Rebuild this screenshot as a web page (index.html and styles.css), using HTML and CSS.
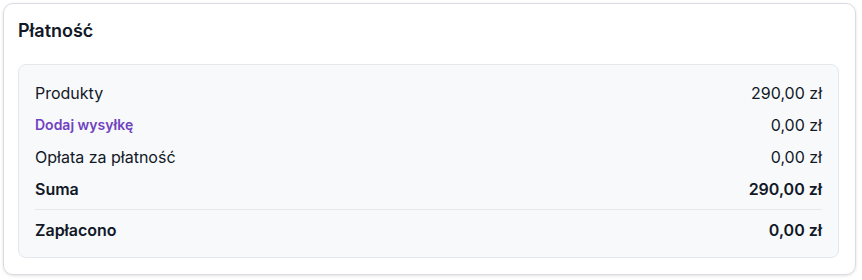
FILE: index.html
```html
<!DOCTYPE html>
<html lang="pl">
<head>
    <meta charset="UTF-8">
    <meta name="viewport" content="width=device-width, initial-scale=1.0">
    <title>Płatność</title>
    <link rel="stylesheet" href="styles.css">
</head>
<body>
    <div class="card">
        <div class="card-title">Płatność</div>
        <div class="summary">
            <div class="row">
                <span>Produkty</span>
                <span>290,00 zł</span>
            </div>
            <div class="row">
                <a class="link" href="#">Dodaj wysyłkę</a>
                <span>0,00 zł</span>
            </div>
            <div class="row">
                <span>Opłata za płatność</span>
                <span>0,00 zł</span>
            </div>
            <div class="row total">
                <span>Suma</span>
                <span>290,00 zł</span>
            </div>
            <div class="row total paid">
                <span>Zapłacono</span>
                <span>0,00 zł</span>
            </div>
        </div>
    </div>
</body>
</html>
```

FILE: styles.css
```css
body {
    margin: 0;
    padding: 3px 6px 5px 3px;
    font-family: Inter, "Noto Sans", sans-serif;
    color: #111827;
    background: #ffffff;
}
.card {
    border: 1px solid #d9dce3;
    border-radius: 10px;
    box-shadow: 0 1px 3px rgba(0, 0, 0, 0.12);
    padding: 15px 16px 16px 14px;
}
.card-title {
    font-size: 18px;
    font-weight: 600;
    line-height: 24px;
    margin-bottom: 21px;
}
.summary {
    background: #f8f9fb;
    border: 1px solid #e4e7ec;
    border-radius: 8px;
    padding: 17px 16px 16px 16px;
    display: flex;
    flex-direction: column;
    gap: 10px;
}
.row {
    display: flex;
    justify-content: space-between;
    align-items: center;
    font-size: 16px;
    line-height: 22px;
}
.link {
    color: #6f42c1;
    font-size: 14px;
    font-weight: 600;
    text-decoration: none;
}
.total {
    font-weight: 600;
}
.paid {
    border-top: 1px solid #e4e7ec;
    margin-top: -1px;
    padding-top: 9px;
}
```
